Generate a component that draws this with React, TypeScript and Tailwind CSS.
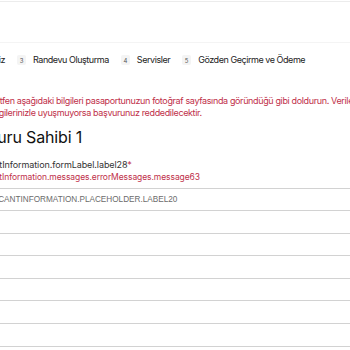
const steps = [
  { n: 3, label: 'Randevu Oluşturma' },
  { n: 4, label: 'Servisler' },
  { n: 5, label: 'Gözden Geçirme ve Ödeme' },
];

export default function App() {
  return (
    <div className="w-[350px] h-[350px] overflow-hidden bg-white font-['Inter',sans-serif]">
      <div className="mt-px border-t border-[#ececec]" />
      <div className="h-[40px]" />
      <div className="border-t border-[#f4f4f4]" />

      {/* stepper, scrolled so that step 2 is mostly off-screen */}
      <div className="flex items-center h-[34px] whitespace-nowrap text-[9px] tracking-[-0.05em] text-[#222]">
        <div className="w-[5px] flex justify-end shrink-0">
          <span>Kişisel Bilgileriniz</span>
        </div>
        {steps.map((s) => (
          <div key={s.n} className="flex items-center gap-[7px] ml-[12px] shrink-0">
            <span className="w-[9px] h-[10px] flex items-center justify-center bg-[#f4f4f4] rounded-[2px] text-[6px] text-[#555] tracking-normal">
              {s.n}
            </span>
            <span>{s.label}</span>
          </div>
        ))}
      </div>

      <p className="mt-[18px] ml-[-10px] whitespace-nowrap text-[9px] leading-[12px] tracking-[-0.04em] text-[#c0304a]">
        Lütfen aşağıdaki bilgileri pasaportunuzun fotoğraf sayfasında göründüğü gibi doldurun. Verilen bilgiler pasaportunuzdaki
        <br />
        bilgilerinizle uyuşmuyorsa başvurunuz reddedilecektir.
      </p>

      <div className="ml-[-33px] w-[420px]">
        <h2 className="mt-[8px] ml-[-6px] text-[16px] leading-[20px] tracking-[-0.01em] text-[#111] whitespace-nowrap">
          Başvuru Sahibi 1
        </h2>
        <div className="mt-[11px] ml-[-3px] text-[9px] leading-[13px] tracking-[-0.01em] text-[#333] whitespace-nowrap">
          applicantInformation.formLabel.label28<span className="text-[#c0304a]">*</span>
        </div>
        <div className="ml-[-1px] text-[8.5px] leading-[13px] tracking-[-0.01em] text-[#c0304a] whitespace-nowrap">
          applicantInformation.messages.errorMessages.message63
        </div>
        <div className="mt-[4px] flex flex-col">
          <input
            className="h-[23px] border-t border-b border-[#d2d2d2] px-[8px] text-[8.2px] font-['Liberation_Sans',sans-serif] placeholder:text-[#6b6b6b] outline-none"
            placeholder="APPLICANTINFORMATION.PLACEHOLDER.LABEL20"
          />
          {[0, 1, 2, 3, 4, 5].map((i) => (
            <input key={i} className="h-[22.6px] border-b border-[#d2d2d2] outline-none" />
          ))}
        </div>
      </div>
    </div>
  );
}
